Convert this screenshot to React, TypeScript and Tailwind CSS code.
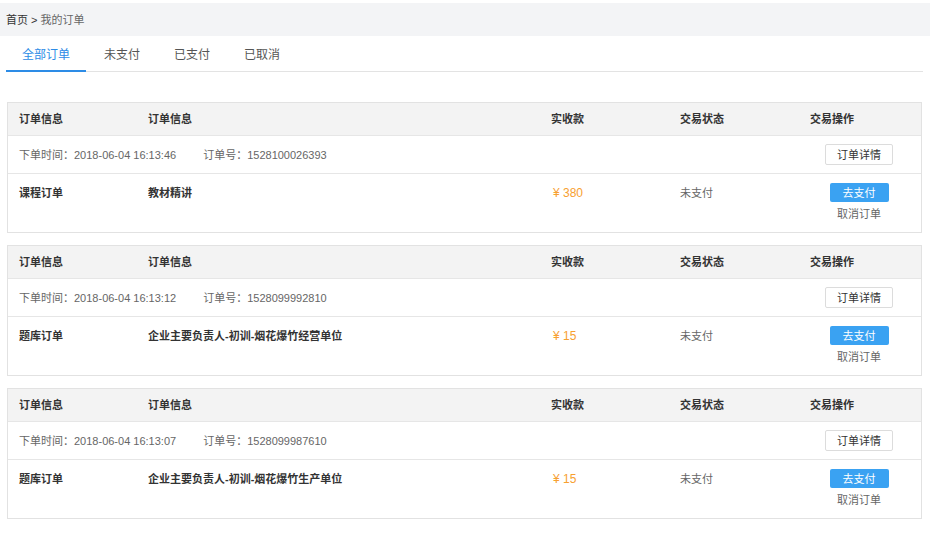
import React from 'react';

interface Order {
    time: string;
    no: string;
    type: string;
    name: string;
    price: string;
    status: string;
}

const orders: Order[] = [
    { time: '2018-06-04 16:13:46', no: '1528100026393', type: '课程订单', name: '教材精讲', price: '380', status: '未支付' },
    { time: '2018-06-04 16:13:12', no: '1528099992810', type: '题库订单', name: '企业主要负责人-初训-烟花爆竹经营单位', price: '15', status: '未支付' },
    { time: '2018-06-04 16:13:07', no: '1528099987610', type: '题库订单', name: '企业主要负责人-初训-烟花爆竹生产单位', price: '15', status: '未支付' },
];

const tabs = ['全部订单', '未支付', '已支付', '已取消'];

const grid = 'grid grid-cols-[129px_403px_129px_130px_1fr]';

const OrderCard: React.FC<{ order: Order }> = ({ order }) => {
    return (
        <div className="border border-[#e2e2e2] mt-[12px] first:mt-0">
            <div className={`${grid} h-[33px] items-center bg-[#f3f3f3] border-b border-[#e6e6e6] font-bold text-[#333]`}>
                <div className="pl-[11px]">订单信息</div>
                <div className="pl-[11px]">订单信息</div>
                <div className="pl-[11px]">实收款</div>
                <div className="pl-[11px]">交易状态</div>
                <div className="pl-[11px]">交易操作</div>
            </div>
            <div className="flex items-center h-[38px] border-b border-[#e6e6e6] pl-[11px] pr-[28px] text-[#666]">
                <span>下单时间：{order.time}</span>
                <span className="ml-[27px]">订单号：{order.no}</span>
                <button className="ml-auto h-[21px] w-[68px] border border-[#dcdcdc] rounded-[2px] bg-white text-[#333]">
                    订单详情
                </button>
            </div>
            <div className={`${grid} h-[58px] items-start`}>
                <div className="pl-[11px] pt-[11px] font-bold text-[#333]">{order.type}</div>
                <div className="pl-[11px] pt-[11px] font-bold text-[#333]">{order.name}</div>
                <div className="pl-[13px] pt-[11px] text-[12px] text-[#f7a030]">¥ {order.price}</div>
                <div className="pl-[11px] pt-[11px] text-[#666]">{order.status}</div>
                <div className="flex flex-col items-center pt-[9px] pr-[2px]">
                    <button className="h-[19px] w-[59px] rounded-[2px] bg-[#3aa2f2] text-white">去支付</button>
                    <span className="mt-[4px] text-[#666]">取消订单</span>
                </div>
            </div>
        </div>
    );
};

export default function App() {
    return (
        <div className="w-[930px] min-h-[533px] bg-white text-[11px] leading-[16px] font-['Liberation_Sans','Noto_Sans_CJK_SC',sans-serif]">
            <div className="mt-[3px] h-[33px] bg-[#f3f4f6] flex items-center px-[6px]">
                <span className="text-[#333]">首页</span>
                <span className="mx-[3px] text-[#333]">&gt;</span>
                <span className="text-[#666]">我的订单</span>
            </div>
            <div className="pl-[6px] pr-[7px]">
                <div className="flex gap-[2px] border-b border-[#e3e3e3] h-[36px]">
                    {tabs.map((t, i) => (
                        <div
                            key={t}
                            className={`px-[16px] pt-[3px] flex items-center text-[12px] mb-[-1px] ${i === 0
                                ? 'text-[#2d8ce6] border-b-2 border-[#2d8ce6]'
                                : 'text-[#555] border-b-2 border-transparent'
                                }`}
                        >
                            {t}
                        </div>
                    ))}
                </div>
                <div className="mt-[30px] pl-[1px] pr-[1px]">
                    {orders.map((o) => (
                        <OrderCard key={o.no} order={o} />
                    ))}
                </div>
            </div>
        </div>
    );
}
